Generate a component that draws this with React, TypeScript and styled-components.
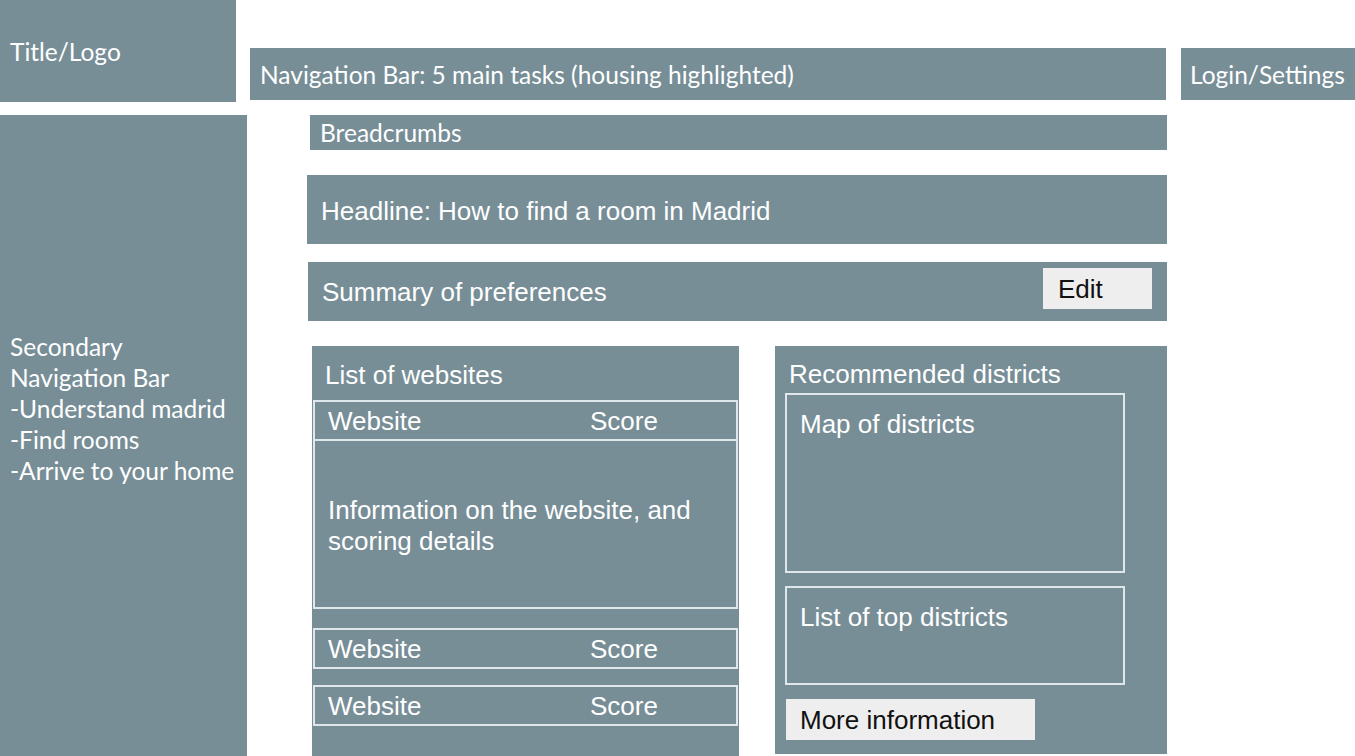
import React from 'react';
import styled, { createGlobalStyle } from 'styled-components';

const PANEL = '#778e97';
const LINE = '#dfe7ea';

const GlobalStyle = createGlobalStyle`
  html, body {
    margin: 0;
    padding: 0;
    background: #ffffff;
    overflow: hidden;
  }
  * {
    box-sizing: border-box;
  }
`;

const Page = styled.div`
  width: 1355px;
  height: 756px;
  display: flex;
  flex-direction: column;
  color: #ffffff;
`;

const Header = styled.header`
  display: flex;
  align-items: flex-start;
  height: 102px;
`;

const Block = styled.div`
  background: ${PANEL};
  display: flex;
  align-items: center;
  font-family: Lato, 'Liberation Sans', sans-serif;
  font-size: 24.5px;
  white-space: nowrap;
`;

const TitleBox = styled(Block)`
  width: 236px;
  height: 102px;
  padding-left: 10px;
`;

const NavBar = styled(Block)`
  width: 916px;
  height: 52px;
  margin: 48px 0 0 14px;
  padding-left: 10px;
`;

const LoginBox = styled(Block)`
  flex: 1;
  height: 52px;
  margin: 48px 0 0 15px;
  padding-left: 9px;
`;

const Body = styled.div`
  display: flex;
  margin-top: 13px;
  height: 641px;
`;

const Sidebar = styled.aside`
  width: 247px;
  background: ${PANEL};
  padding: 216px 0 0 10px;
  font-family: Lato, 'Liberation Sans', sans-serif;
  font-size: 24.5px;
  line-height: 31px;
  white-space: nowrap;
`;

const Main = styled.main`
  width: 860px;
  margin-left: 60px;
  display: flex;
  flex-direction: column;
`;

const Breadcrumbs = styled(Block)`
  height: 35px;
  margin-left: 3px;
  padding-left: 10px;
`;

const Bar = styled.div`
  background: ${PANEL};
  display: flex;
  align-items: center;
  font-family: 'Liberation Sans', Arial, sans-serif;
  font-size: 26px;
`;

const Headline = styled(Bar)`
  height: 69px;
  margin-top: 25px;
  padding: 3px 0 0 14px;
`;

const Summary = styled(Bar)`
  height: 59px;
  margin: 18px 0 0 1px;
  padding: 2px 15px 0 14px;
  justify-content: space-between;
`;

const LightButton = styled.button<{ $width: number }>`
  width: ${(p) => p.$width}px;
  height: 41px;
  border: none;
  background: #eeeeee;
  color: #111111;
  font-family: 'Liberation Sans', Arial, sans-serif;
  font-size: 26px;
  text-align: left;
  padding: 2px 0 0 14px;
`;

const EditButton = styled(LightButton)`
  align-self: flex-start;
  margin-top: 4px;
  padding-left: 15px;
`;

const Panels = styled.div`
  display: flex;
  flex: 1;
  margin-top: 25px;
`;

const Panel = styled.section<{ $width: number; $left: number }>`
  width: ${(p) => p.$width}px;
  margin-left: ${(p) => p.$left}px;
  background: ${PANEL};
  display: flex;
  flex-direction: column;
  font-family: 'Liberation Sans', Arial, sans-serif;
  font-size: 26px;
`;

const PanelTitle = styled.div<{ $height: number; $pad: number; $top: number }>`
  height: ${(p) => p.$height}px;
  padding: ${(p) => p.$top}px 0 0 ${(p) => p.$pad}px;
  display: flex;
  align-items: center;
`;

const Group = styled.div<{ $gap?: number }>`
  margin: ${(p) => p.$gap ?? 0}px 1px 0 1px;
  border: 2px solid ${LINE};
`;

const Row = styled.div`
  height: 37px;
  display: grid;
  grid-template-columns: 262px 1fr;
  align-items: center;
  padding: 2px 0 0 13px;
`;

const Info = styled.div`
  height: 168px;
  border-top: 2px solid ${LINE};
  display: flex;
  align-items: center;
  padding: 4px 20px 0 13px;
  line-height: 31px;
`;

const DistrictBox = styled.div<{ $height: number; $gap: number }>`
  height: ${(p) => p.$height}px;
  margin: ${(p) => p.$gap}px 42px 0 10px;
  border: 2px solid ${LINE};
  padding: 14px 0 0 13px;
`;

const MoreButton = styled(LightButton)`
  margin: 14px 0 0 11px;
`;

const WebsiteRow = () => (
  <Row>
    <span>Website</span>
    <span>Score</span>
  </Row>
);

export default function App() {
  return (
    <>
      <GlobalStyle />
      <Page>
        <Header>
          <TitleBox>Title/Logo</TitleBox>
          <NavBar>Navigation Bar: 5 main tasks (housing highlighted)</NavBar>
          <LoginBox>Login/Settings</LoginBox>
        </Header>
        <Body>
          <Sidebar>
            Secondary
            <br />
            Navigation Bar
            <br />
            -Understand madrid
            <br />
            -Find rooms
            <br />
            -Arrive to your home
          </Sidebar>
          <Main>
            <Breadcrumbs>Breadcrumbs</Breadcrumbs>
            <Headline>Headline: How to find a room in Madrid</Headline>
            <Summary>
              <span>Summary of preferences</span>
              <EditButton $width={109}>Edit</EditButton>
            </Summary>
            <Panels>
              <Panel $width={427} $left={5}>
                <PanelTitle $height={54} $pad={13} $top={4}>List of websites</PanelTitle>
                <Group>
                  <WebsiteRow />
                  <Info>
                    Information on the website, and
                    <br />
                    scoring details
                  </Info>
                </Group>
                <Group $gap={19}>
                  <WebsiteRow />
                </Group>
                <Group $gap={16}>
                  <WebsiteRow />
                </Group>
              </Panel>
              <Panel $width={392} $left={36} style={{ marginBottom: 2 }}>
                <PanelTitle $height={47} $pad={14} $top={10}>Recommended districts</PanelTitle>
                <DistrictBox $height={180} $gap={0}>Map of districts</DistrictBox>
                <DistrictBox $height={99} $gap={13}>List of top districts</DistrictBox>
                <MoreButton $width={249}>More information</MoreButton>
              </Panel>
            </Panels>
          </Main>
        </Body>
      </Page>
    </>
  );
}
